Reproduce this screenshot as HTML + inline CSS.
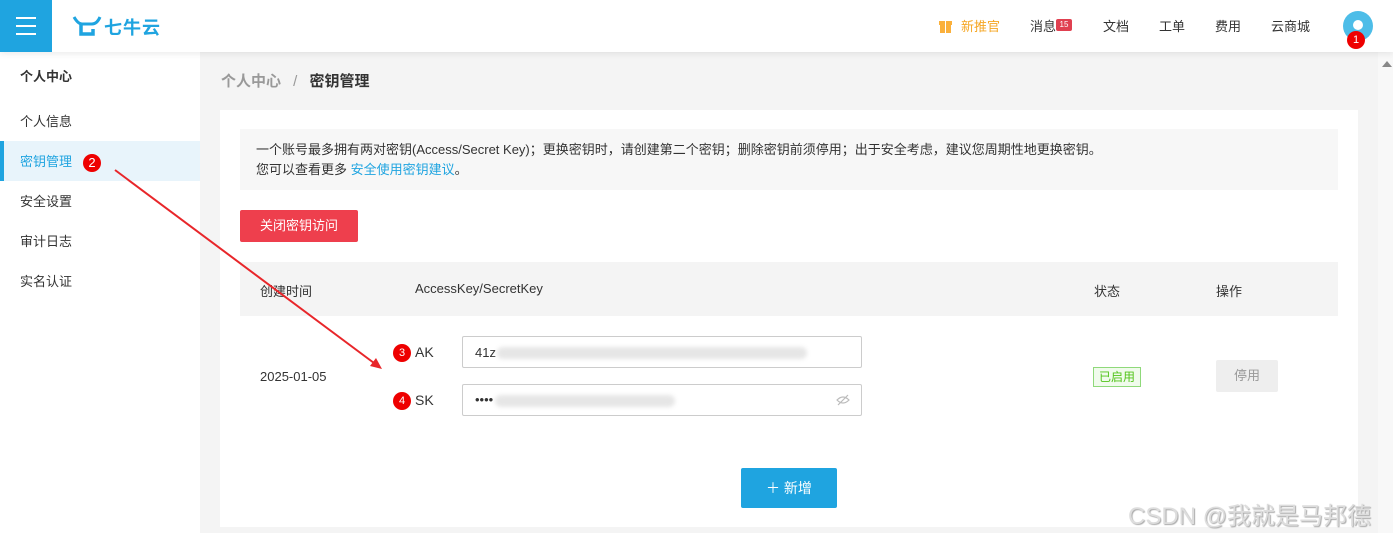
<!DOCTYPE html>
<html><head><meta charset="utf-8"><style>
*{margin:0;padding:0;box-sizing:border-box}
body{width:1393px;height:533px;overflow:hidden;background:#f4f4f4;font-family:"Liberation Sans","Noto Sans CJK SC",sans-serif;font-size:13px;color:#333;position:relative}
.top{position:absolute;left:0;top:0;width:1393px;height:52px;background:#fff;box-shadow:0 2px 6px rgba(0,0,0,.08);z-index:2}
.menu{position:absolute;left:0;top:0;width:52px;height:52px;background:#1fa4e0}
.menu i{position:absolute;left:16px;width:20px;height:2px;background:#fff}
.nav{position:absolute;top:16px;font-size:13px;color:#333}
.side{position:absolute;left:0;top:52px;width:200px;height:481px;background:#fff}
.side div{position:absolute;left:20px;font-size:13px}
.abs{position:absolute}
.card{position:absolute;left:220px;top:110px;width:1138px;height:417px;background:#fff}
.badge{position:absolute;width:18px;height:18px;border-radius:50%;background:#e00;color:#fff;font-size:11px;text-align:center;line-height:18px}
.inp{position:absolute;left:462px;width:400px;height:32px;border:1px solid #ccc;border-radius:2px;background:#fff}
.blur{position:absolute;height:12px;background:#e6e6e6;border-radius:6px;filter:blur(2px)}
</style></head><body>
<div class="top">
 <div class="menu"><i style="top:17px"></i><i style="top:25px"></i><i style="top:33px"></i></div>
 <svg class="abs" style="left:72px;top:14px" width="30" height="24" viewBox="0 0 30 24"><path d="M2 3 Q6 10 10 10 L20 10 Q25 10 28 3" stroke="#1fa4e0" stroke-width="3" fill="none"/><path d="M9 10 L9 20 L21 20 L21 15" stroke="#1fa4e0" stroke-width="3.5" fill="none"/></svg>
 <div class="abs" style="left:104px;top:14px;font-size:18px;font-weight:bold;color:#1fa4e0;letter-spacing:1px">七牛云</div>
 <svg class="abs" style="left:938px;top:17px" width="15" height="16"><rect x="1" y="4" width="13" height="4" fill="#fbb03b"/><rect x="2" y="8" width="11" height="8" fill="#fbb03b"/><rect x="7" y="3" width="1" height="13" fill="#fff"/></svg>
 <div class="nav" style="left:961px;color:#f5a623">新推官</div>
 <div class="nav" style="left:1030px">消息</div>
 <div class="abs" style="left:1056px;top:19px;width:16px;height:12px;background:#e04050;border-radius:2px;color:#fff;font-size:8px;text-align:center;line-height:12px">15</div>
 <div class="nav" style="left:1103px">文档</div>
 <div class="nav" style="left:1159px">工单</div>
 <div class="nav" style="left:1215px">费用</div>
 <div class="nav" style="left:1271px">云商城</div>
 <div class="abs" style="left:1343px;top:11px;width:30px;height:30px;border-radius:50%;background:#4dbde8"></div>
 <div class="abs" style="left:1353px;top:20px;width:10px;height:10px;border-radius:50%;background:#fff"></div>
 <div class="badge" style="left:1347px;top:31px">1</div>
</div>
<div class="abs" style="left:1378px;top:52px;width:15px;height:481px;background:#f8f8f8"></div>
<div class="abs" style="left:1382px;top:61px;width:0;height:0;border-left:5px solid transparent;border-right:5px solid transparent;border-bottom:6px solid #888"></div>
<div class="side">
 <div style="top:14px;font-weight:bold">个人中心</div>
 <div style="top:59px">个人信息</div>
 <div style="left:0;top:89px;width:200px;height:40px;background:#e8f4fb;border-left:4px solid #1fa4e0"></div>
 <div style="top:99px;color:#1fa4e0">密钥管理</div>
 <div class="badge" style="left:83px;top:102px;width:18px">2</div>
 <div style="top:139px">安全设置</div>
 <div style="top:179px">审计日志</div>
 <div style="top:219px">实名认证</div>
</div>
<div class="abs" style="left:221px;top:70px;font-size:15px;color:#999;font-weight:bold">个人中心 <span style="font-weight:normal;margin:0 8px">/</span> <span style="color:#333">密钥管理</span></div>
<div class="card">
 <div class="abs" style="left:20px;top:19px;width:1098px;height:61px;background:#f7f7f7"></div>
 <div class="abs" style="left:36px;top:30px;line-height:20px">一个账号最多拥有两对密钥(Access/Secret Key)；更换密钥时，请创建第二个密钥；删除密钥前须停用；出于安全考虑，建议您周期性地更换密钥。<br>您可以查看更多 <span style="color:#1fa4e0">安全使用密钥建议</span>。</div>
 <div class="abs" style="left:20px;top:100px;width:118px;height:32px;background:#ee3f4d;color:#fff;text-align:center;line-height:32px;border-radius:2px">关闭密钥访问</div>
 <div class="abs" style="left:20px;top:152px;width:1098px;height:54px;background:#f4f4f4"></div>
 <div class="abs" style="left:40px;top:171px">创建时间</div>
 <div class="abs" style="left:195px;top:171px">AccessKey/SecretKey</div>
 <div class="abs" style="left:874px;top:171px">状态</div>
 <div class="abs" style="left:996px;top:171px">操作</div>
 <div class="abs" style="left:40px;top:259px">2025-01-05</div>
 <div class="abs" style="left:873px;top:257px;width:48px;height:20px;border:1px solid #8fd97a;background:#f0fbec;color:#52c41a;font-size:12px;text-align:center;line-height:18px">已启用</div>
 <div class="abs" style="left:996px;top:250px;width:62px;height:32px;background:#eee;color:#999;text-align:center;line-height:32px;border-radius:2px">停用</div>
 <div class="abs" style="left:521px;top:358px;width:96px;height:40px;background:#1fa4e0;color:#fff;text-align:center;line-height:40px;font-size:14px;border-radius:2px">＋ 新增</div>
</div>
<div class="badge" style="left:393px;top:344px">3</div>
<div class="abs" style="left:415px;top:344px;font-size:14px">AK</div>
<div class="inp" style="top:336px"><span class="abs" style="left:12px;top:8px">41z</span><div class="blur" style="left:34px;top:10px;width:310px"></div></div>
<div class="badge" style="left:393px;top:392px">4</div>
<div class="abs" style="left:415px;top:392px;font-size:14px">SK</div>
<div class="inp" style="top:384px"><span class="abs" style="left:12px;top:7px">••••</span><div class="blur" style="left:32px;top:10px;width:180px"></div>
<svg class="abs" style="left:373px;top:8px" width="14" height="14" viewBox="0 0 14 14"><path d="M1 7 Q7 1 13 7 Q7 13 1 7Z M2 12 L12 2" stroke="#bbb" fill="none" stroke-width="1.2"/></svg></div>
<svg class="abs" style="left:0;top:0" width="1393" height="533"><line x1="115" y1="170" x2="378" y2="366" stroke="#e8262a" stroke-width="2"/><path d="M382 369 L370 366 L376 358Z" fill="#e8262a"/></svg>
<div class="abs" style="left:1128px;top:496px;font-size:24px;color:#ddd;text-shadow:1px 1px 1px #aaa">CSDN @我就是马邦德</div>
</body></html>
